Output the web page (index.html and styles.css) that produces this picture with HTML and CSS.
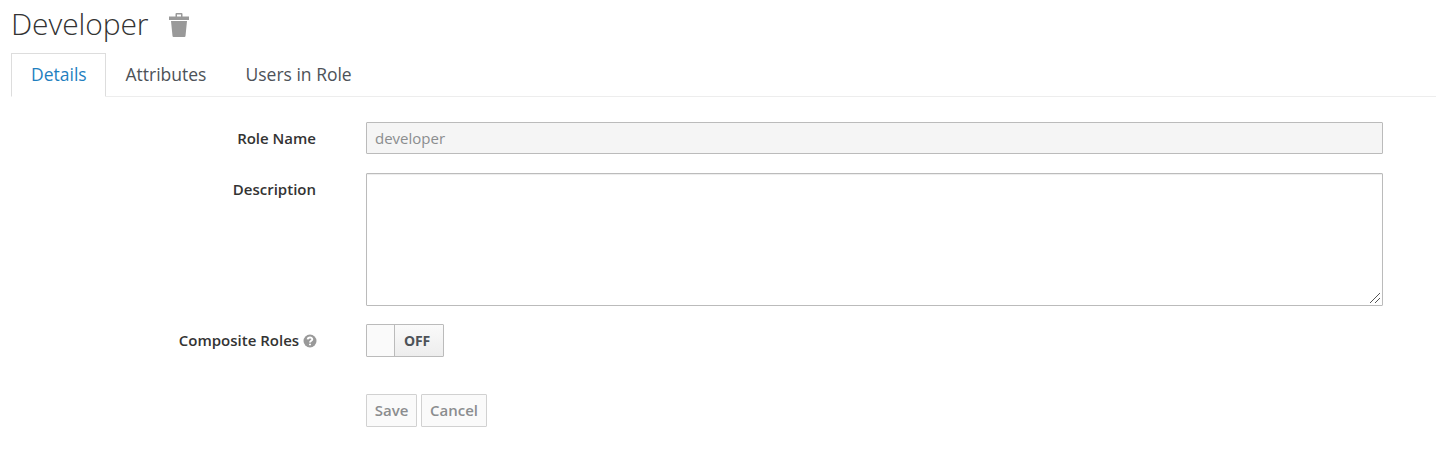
FILE: index.html
```html
<!DOCTYPE html>
<html lang="en">
<head>
<meta charset="utf-8">
<title>Developer</title>
<link rel="stylesheet" href="styles.css">
</head>
<body>
<header class="page-header">
  <h1 class="title">Developer</h1>
  <svg class="trash" viewBox="0 0 20 24" aria-label="Delete"><path fill="#999" fill-rule="evenodd" d="M0 3.500h6.500V1q0-1 1-1h5q1 0 1 1v2.500H20V7H0zM8 1.500v2h4v-2zM2 8h16l-1.500 15q-.1 1-1 1h-11q-.9 0-1-1z"/></svg>
</header>
<nav class="tabs">
  <a class="tab active">Details</a>
  <a class="tab">Attributes</a>
  <a class="tab">Users in Role</a>
</nav>
<form class="form">
  <div class="row name-row"><label class="label">Role Name</label><input class="control input" value="developer" disabled></div>
  <div class="row desc-row"><label class="label">Description</label><div class="textarea-wrap"><textarea class="control textarea"></textarea><svg class="grip" viewBox="0 0 10 10"><path d="M0 10L10 0M5 10L10 5" stroke="#555" fill="none"/></svg></div></div>
  <div class="row switch-row"><label class="label">Composite Roles <svg class="help" viewBox="0 0 14 14"><circle cx="7" cy="7" r="6.500" fill="#999"/><path d="M4.700 5.300C4.900 3 9.300 2.800 9.300 5.300C9.300 6.800 7 6.700 7 8.500M7 9.700V11.300" fill="none" stroke="#fff" stroke-width="1.900"/></svg></label>
    <div class="switch"><span class="knob"></span><span class="off">OFF</span></div></div>
  <div class="actions"><button class="btn save" type="button" disabled>Save</button><button class="btn cancel" type="button" disabled>Cancel</button></div>
</form>
</body>
</html>
```
FILE: styles.css
```css
* { box-sizing: border-box; }
body { margin: 0; background: #fff; color: #333; font: 15px/20px "Open Sans", sans-serif; overflow: hidden; }
.page-header { display: flex; height: 53px; padding-left: 11px; }
.title { margin: 5px 0 0; width: 158px; font-size: 30px; line-height: 38px; font-weight: 300; letter-spacing: -0.1px; }
.trash { width: 20px; height: 24px; margin-top: 13px; }
.tabs { display: flex; height: 44px; margin-left: 11px; border-bottom: 1px solid #ededed; }
.tab { height: 43px; padding: 0 19.500px; font-size: 17.500px; line-height: 43px; color: #4d5258; white-space: nowrap; }
.tab.active { width: 95px; height: 44px; padding: 0 19px; border: 1px solid #ddd; border-bottom-color: #fff; background: #fff; color: #1f7fbf; line-height: 41px; }
.form { padding-top: 25px; }
.row { display: flex; }
.label { width: 316px; margin-right: 50px; padding-top: 6px; font-weight: 600; text-align: right; }
.control { width: 1017px; border: 1px solid #bbb; border-radius: 1px; font: inherit; padding: 5px 8px; }
.input { height: 32px; background: #f5f5f5; color: #8b8d8f; }
.desc-row { margin-top: 19px; }
.textarea-wrap { position: relative; height: 133px; }
.textarea { display: block; height: 133px; background: #fff; box-shadow: inset 0 1px 1px #00000013; resize: none; }
.grip { position: absolute; right: 3px; bottom: 3px; width: 10px; height: 10px; }
.switch-row { margin-top: 18px; }
.switch-row .label { position: relative; left: 1px; }
.help { width: 14px; height: 14px; vertical-align: -2px; }
.switch { display: flex; width: 78px; height: 33px; border: 1px solid #bbb; border-radius: 1px; background: linear-gradient(#fafafa, #ededed); }
.knob { width: 28px; border-right: 1px solid #bbb; background: #fafafa; }
.off { flex: 1; padding-right: 4px; text-align: center; font-size: 14px; line-height: 32px; font-weight: 700; letter-spacing: -0.1px; color: #4d5258; }
.actions { display: flex; gap: 4px; margin: 37px 0 0 366px; }
.btn { height: 33px; padding: 0 0 2px; border: 1px solid #d1d1d1; border-radius: 1px; background: #fafafa; color: #8b8d8f; font: 600 15px/20px "Open Sans", sans-serif; }
.save { width: 51px; }
.cancel { width: 66px; }
```
